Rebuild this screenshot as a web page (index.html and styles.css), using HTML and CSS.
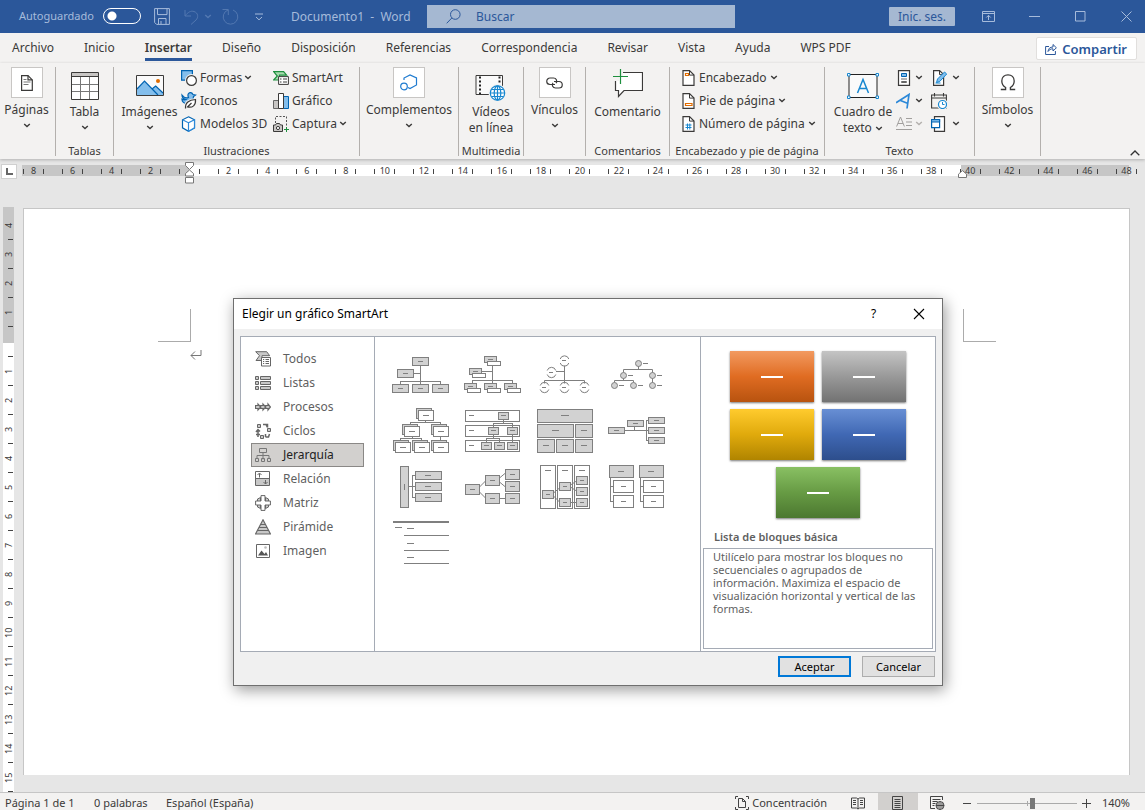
FILE: index.html
```html
<!DOCTYPE html>
<html lang="es">
<head>
<meta charset="utf-8">
<title>Documento1 - Word</title>
<link rel="stylesheet" href="styles.css">
</head>
<body>
<svg class="defs" width="0" height="0" aria-hidden="true">
  <symbol id="chev" viewBox="0 0 8 5"><path d="M1.200 1l2.800 2.600L6.800 1" fill="none" stroke="currentColor" stroke-width="1.400"/></symbol>
</svg>
<div class="app">
  <header class="titlebar">
    <label class="autosave">Autoguardado <input type="checkbox" class="toggle"></label>
    <button class="tb-btn save" aria-label="Guardar"><svg width="16" height="17" viewBox="0 0 16 17"><path d="M.6.6h14.800v15.800H2.600L.6 14.400zM3.500.6v6h9.500v-6M4.500 16v-5.500h7.500V16M7 16v-3" /></svg></button>
    <button class="tb-btn undo dim" aria-label="Deshacer"><svg width="15" height="16" viewBox="0 0 15 16"><path d="M1 1v6h6M1.200 6.800C4 3 7 1.500 10 2.500c4.500 1.500 4.500 6 2 8.500L7 15.500"/></svg></button>
    <button class="tb-btn more dim" aria-label="Opciones de deshacer"><svg width="8" height="5"><use href="#chev"/></svg></button>
    <button class="tb-btn redo dim" aria-label="Repetir"><svg width="17" height="17" viewBox="0 0 17 17"><path d="M.5 1.500h5.800v5.500M11 2A7.300 7.300 0 1 1 6 2"/></svg></button>
    <button class="tb-btn custom" aria-label="Personalizar barra"><svg width="8" height="8" viewBox="0 0 8 8"><path d="M0 1h8M1 4l3 2.800L7 4"/></svg></button>
    <span class="doc-title">Documento1&nbsp; -&nbsp; Word</span>
    <label class="search"><svg width="15" height="15" viewBox="0 0 15 15"><circle cx="9.300" cy="5.500" r="4.800"/><path d="M5.800 9L.7 14.300"/></svg><input type="text" placeholder="Buscar" aria-label="Buscar"></label>
    <span class="grow"></span>
    <button class="signin">Inic. ses.</button>
    <div class="winbtns">
      <button aria-label="Opciones de presentación de la cinta"><svg width="13" height="11" viewBox="0 0 13 11"><path d="M.5.5h12v10H.5zM.5 2.500h12M6.500 9V4.500M4.300 6.500l2.200-2.200 2.200 2.200"/></svg></button>
      <button aria-label="Minimizar"><svg width="11" height="11"><path d="M0 5.500h11"/></svg></button>
      <button aria-label="Maximizar"><svg width="11" height="11"><path d="M.5.5h9.500v9.500H.5z"/></svg></button>
      <button aria-label="Cerrar"><svg width="11" height="11"><path d="M.5.5l10 10M10.500.5l-10 10"/></svg></button>
    </div>
  </header>

  <nav class="tabs">
    <a href="#">Archivo</a><a href="#">Inicio</a><a href="#" class="active">Insertar</a><a href="#">Diseño</a><a href="#">Disposición</a><a href="#">Referencias</a><a href="#">Correspondencia</a><a href="#">Revisar</a><a href="#">Vista</a><a href="#">Ayuda</a><a href="#">WPS PDF</a>
    <span class="grow"></span>
    <button class="share"><svg width="12" height="12" viewBox="0 0 12 12"><path d="M4 3.500H.6v8h9.800V8M3 8.500c.3-3 2-4.500 5-4.500V1.500l3.400 3.300L8 8V5.800C5.500 5.800 4.200 6.800 3 8.500z"/></svg>Compartir</button>
  </nav>

  <div class="ribbon">
    <section class="group g-pages">
      <div class="body"><button class="big boxed"><span class="ico"><svg width="12" height="16" viewBox="0 0 12 16"><path d="M.6.6h6.400l4.300 4.300v10.500H.6z" fill="#fff" stroke="#3b3a39" stroke-width="1.200"/><path d="M7 .6v4.300h4.300" fill="none" stroke="#3b3a39" stroke-width="1.200"/><path d="M2.500 4.500h3M2.500 7h7M2.500 9.500h5" stroke="#777"/></svg></span><span>Páginas</span><svg class="chev" width="8" height="5"><use href="#chev"/></svg></button></div>
    </section>
    <section class="group g-table">
      <div class="body"><button class="big"><span class="ico"><svg width="28" height="28" viewBox="0 0 28 28"><path d="M.5.5h27v27H.5z" fill="#fff"/><path d="M1 1h26v4H1z" fill="#c8c6c4"/><path d="M1 12.500h26M1 19.500h26M9.500 5v22M18.500 5v22" stroke="#777"/><path d="M.5.5h27v27H.5zM.5 4.500h27" fill="none" stroke="#3b3a39"/></svg></span><span>Tabla</span><svg class="chev" width="8" height="5"><use href="#chev"/></svg></button></div>
      <h2>Tablas</h2>
    </section>
    <section class="group g-illus">
      <div class="body">
        <button class="big"><span class="ico"><svg width="28" height="21" viewBox="0 0 28 21"><path d="M.5.5h27v20H.5z" fill="#fafafa"/><path d="M1 14L8.500 6l7.500 7.500 3.500-2.500 7.500 7v2H1z" fill="#83beec"/><path d="M1 14L8.500 6 22 20M16 14l3.700-3 7.300 7" fill="none" stroke="#0063b1" stroke-width="1.200"/><circle cx="22" cy="6" r="2" fill="#e06c00"/><path d="M.5.5h27v20H.5z" fill="none" stroke="#3b3a39"/></svg></span><span>Imágenes</span><svg class="chev" width="8" height="5"><use href="#chev"/></svg></button>
        <div class="stack s1">
          <button class="small"><svg width="16" height="16" viewBox="0 0 16 16"><path d="M.6.6h10.800v9.500H.6z" fill="#83beec" stroke="#0063b1" stroke-width="1.200"/><circle cx="10.500" cy="10.500" r="5" fill="#f3f2f1" stroke="#f3f2f1" stroke-width="3"/><circle cx="10.500" cy="10.500" r="4.900" fill="#fff" stroke="#3b3a39" stroke-width="1.200"/></svg>Formas<svg class="chev" width="8" height="5"><use href="#chev"/></svg></button>
          <button class="small"><svg width="16" height="17" viewBox="0 0 16 17"><path d="M1 3c2 2.500 4.500 3.500 6.500 2.500C6 2 8 .5 9.500.6 11 .7 11.500 1.500 12 2.500l2.500.5-2 1.500c0 3-2.500 6.500-6 7C3 12 .8 9.500 1 7c1.500 1 3 1 4 .5C2.500 7 1 5.500 1 3z" fill="#83beec" stroke="#0063b1" stroke-width="1.200"/><path d="M4.500 16C4 10.500 8 8 14.500 7.500c.5 6-3 8.500-8 7.500z" fill="#f3f2f1" stroke="#f3f2f1" stroke-width="3"/><path d="M4.500 16.500C4 10.500 8 8 14.500 7.500c.5 6-3 8.500-8 7.500L10.500 11" fill="#fff" stroke="#3b3a39" stroke-width="1.200"/></svg>Iconos</button>
          <button class="small"><svg width="16" height="16" viewBox="0 0 16 16"><path d="M7.500.8l6 3v8l-6 3.400-6-3.400v-8z" fill="#fff" stroke="#0063b1" stroke-width="1.200"/><path d="M1.500 3.800l6 3v8.400l6-3.400v-8l-6 3" fill="#fff" stroke="#2b88d8" stroke-width="1.200"/></svg>Modelos 3D</button>
        </div>
        <div class="stack s2">
          <button class="small"><svg width="16" height="14" viewBox="0 0 16 14"><path d="M.6.6h10l3 3.600H6.500V9H.6l3.700-4z" fill="#a9dbb0" stroke="#1e8f3e" stroke-width="1.200"/><path d="M5.600 5.600h9.800v7.800H5.600z" fill="#fff" stroke="#3b3a39"/><path d="M7 8h1.500M10 8h4M7 11h1.500M10 11h4" stroke="#3b3a39"/></svg>SmartArt</button>
          <button class="small"><svg width="16" height="16" viewBox="0 0 16 16"><path d="M.5 7.500h5v8h-5z" fill="#c8c6c4" stroke="#666"/><path d="M10.500 3.500h5v12h-5z" fill="#83beec" stroke="#0063b1"/><path d="M5.500.5h5v15h-5z" fill="#fff" stroke="#3b3a39"/></svg>Gráfico</button>
          <button class="small"><svg width="16" height="16" viewBox="0 0 16 16"><path d="M2.500 7V.5h11v10" fill="none" stroke="#555" stroke-dasharray="2 1.500"/><path d="M.5 9h2l1-1.500h3L7.500 9h2v6.500h-9z" fill="#c8c6c4" stroke="#3b3a39"/><circle cx="5" cy="12" r="1.600" fill="#fff" stroke="#3b3a39"/><path d="M11 13.500h5M13.500 11v5" stroke="#1e8f3e"/></svg>Captura<svg class="chev" width="8" height="5"><use href="#chev"/></svg></button>
        </div>
      </div>
      <h2>Ilustraciones</h2>
    </section>
    <section class="group g-addins">
      <div class="body"><button class="big boxed"><span class="ico"><svg width="18" height="17" viewBox="0 0 18 17" fill="none" stroke="#1f7bd0" stroke-width="1.200"><path d="M4 6V4l6-3 6.500 3v7L10 14.500 8 13.500"/><circle cx="4" cy="12.500" r="3.300"/></svg></span><span>Complementos</span><svg class="chev" width="8" height="5"><use href="#chev"/></svg></button></div>
    </section>
    <section class="group g-media">
      <div class="body"><button class="big"><span class="ico low"><svg width="31" height="27" viewBox="0 0 31 27"><path d="M1 1.500h26.500v19H1z" fill="#fafafa" stroke="#3b3a39"/><path d="M5 2.500V20M24.500 2.500v8" stroke="#222" stroke-width="2" stroke-dasharray="2 2"/><circle cx="22.500" cy="19" r="9" fill="#f3f2f1"/><g fill="#fff" stroke="#1787d0" stroke-width="1.200"><circle cx="22.500" cy="19" r="7.200"/><ellipse cx="22.500" cy="19" rx="3.300" ry="7.200"/><path d="M15.500 19h14M16.500 15.500h12M16.500 22.500h12M22.500 12v14" fill="none"/></g></svg></span><span>Vídeos<br>en línea</span></button></div>
      <h2>Multimedia</h2>
    </section>
    <section class="group g-links">
      <div class="body"><button class="big boxed"><span class="ico"><svg width="17" height="12" viewBox="0 0 17 12" fill="none" stroke="#3b3a39" stroke-width="1.200"><path d="M9 7.500H4a3.200 3.200 0 0 1 0-6.500h3.500a3.200 3.200 0 0 1 2.500 5.200"/><path d="M8 4.500h5a3.200 3.200 0 0 1 0 6.500H9.500A3.200 3.200 0 0 1 7 5.800"/></svg></span><span>Vínculos</span><svg class="chev" width="8" height="5"><use href="#chev"/></svg></button></div>
    </section>
    <section class="group g-comments">
      <div class="body"><button class="big"><span class="ico high"><svg width="30" height="29" viewBox="0 0 30 29"><path d="M2.500 3.500h27v18H11l-5.500 6v-6h-3z" fill="#fff" stroke="#3b3a39" stroke-width="1.200"/><path d="M0 0h10v7H0zM0 7h6v5H0z" fill="#f3f2f1"/><path d="M0 7.500h15M7.500 0v15" stroke="#1e8f3e" stroke-width="1.200"/></svg></span><span>Comentario</span></button></div>
      <h2>Comentarios</h2>
    </section>
    <section class="group g-header">
      <div class="body"><div class="stack">
        <button class="small"><svg width="13" height="16" viewBox="0 0 13 16"><path d="M1 .6h6.500l4.500 4.500v10.300H1z" fill="#fff" stroke="#3b3a39" stroke-width="1.200"/><path d="M7.500.6v4.500H12" fill="none" stroke="#3b3a39"/><path d="M3.500 3.500h3v2h-3z" fill="#fff" stroke="#e06c00" stroke-width="1.200"/></svg>Encabezado<svg class="chev" width="8" height="5"><use href="#chev"/></svg></button>
        <button class="small"><svg width="13" height="16" viewBox="0 0 13 16"><path d="M1 .6h6.500l4.500 4.500v10.300H1z" fill="#fff" stroke="#3b3a39" stroke-width="1.200"/><path d="M7.500.6v4.500H12" fill="none" stroke="#3b3a39"/><path d="M3.500 10.500h6.500v2H3.500z" fill="#fff" stroke="#e06c00" stroke-width="1.200"/></svg>Pie de página<svg class="chev" width="8" height="5"><use href="#chev"/></svg></button>
        <button class="small"><svg width="13" height="16" viewBox="0 0 13 16"><path d="M1 .6h6.500l4.500 4.500v10.300H1z" fill="#fff" stroke="#3b3a39" stroke-width="1.200"/><path d="M7.500.6v4.500H12" fill="none" stroke="#3b3a39"/><path d="M3.500 9h6M3.500 11.500h6M5.500 7.500v6M7.800 7.500v6" stroke="#1787d0"/></svg>Número de página<svg class="chev" width="8" height="5"><use href="#chev"/></svg></button>
      </div></div>
      <h2>Encabezado y pie de página</h2>
    </section>
    <section class="group g-text">
      <div class="body">
        <button class="big"><span class="ico"><svg width="32" height="26" viewBox="0 0 32 26"><path d="M2 1.500h28v23H2z" fill="#fafafa" stroke="#222"/><path d="M10.500 20L16 6.500 21.500 20M12.500 15.500h7" fill="none" stroke="#1787d0" stroke-width="1.500"/><path d="M.5.5h2.500v2.500H.5zM29 .5h2.500v2.500H29zM.5 23h2.500v2.500H.5zM29 23h2.500v2.500H29z" fill="#fff" stroke="#1787d0"/></svg></span><span>Cuadro de<br>texto <svg class="inline-chev" width="8" height="5"><use href="#chev"/></svg></span></button>
        <div class="stack icons t1">
          <button class="small" aria-label="Elementos rápidos"><svg width="16" height="16" viewBox="0 0 16 16"><path d="M2.500.6h11v14.800h-11z" fill="#fff" stroke="#3b3a39" stroke-width="1.200"/><path d="M5.500 3.500h5v3h-5z" fill="#83beec" stroke="#0063b1"/><path d="M5 9h6M5.500 11.500h5v1h-5z" stroke="#666" fill="none"/></svg><svg class="chev" width="8" height="5"><use href="#chev"/></svg></button>
          <button class="small" aria-label="WordArt"><svg width="16" height="16" viewBox="0 0 16 16"><path d="M0 9.800L13 1.500l-2 14M4.500 7.500l7.500 3" fill="none" stroke="#2b88d8" stroke-width="1.700"/></svg><svg class="chev" width="8" height="5"><use href="#chev"/></svg></button>
          <button class="small off" aria-label="Letra capital"><svg width="16" height="16" viewBox="0 0 16 16"><path d="M.6 10.500L4.500 1 8.400 10.500M2 7.500h5M10 2.500h6M10 6h6M10 9.500h6M0 13.500h16" fill="none" stroke="#a19f9d"/></svg><svg class="chev" width="8" height="5"><use href="#chev"/></svg></button>
        </div>
        <div class="stack icons t2">
          <button class="small" aria-label="Línea de firma"><svg width="16" height="16" viewBox="0 0 16 16"><path d="M2.600.6h6l4 4v10.800h-10z" fill="#fff" stroke="#3b3a39" stroke-width="1.200"/><path d="M8.500.6v4h4" fill="none" stroke="#3b3a39"/><path d="M5.500 12.500l1-3.500L13.500 2l2.200 2-7 7.500z" fill="#83beec" stroke="#1787d0"/><path d="M4.500 13h5" stroke="#1787d0"/></svg><svg class="chev" width="8" height="5"><use href="#chev"/></svg></button>
          <button class="small" aria-label="Fecha y hora"><svg width="16" height="16" viewBox="0 0 16 16"><path d="M.6 2h14.800v13H.6zM.6 5h14.800M3.500 0v3.500M12.500 0v3.500" fill="none" stroke="#3b3a39" stroke-width="1.100"/><circle cx="11.500" cy="11.500" r="5.500" fill="#f3f2f1"/><circle cx="11.500" cy="11.500" r="4" fill="#fff" stroke="#1787d0" stroke-width="1.200"/><path d="M11.500 9v2.500h2" fill="none" stroke="#1787d0"/></svg></button>
          <button class="small" aria-label="Objeto"><svg width="16" height="16" viewBox="0 0 16 16"><path d="M3.500.6h10v14.800h-10z" fill="#fff" stroke="#3b3a39" stroke-width="1.200"/><path d="M.6 3.600h8v8h-8z" fill="#fff" stroke="#0063b1" stroke-width="1.200"/><path d="M.6 3.600h8v2.400h-8z" fill="#83beec" stroke="#0063b1"/></svg><svg class="chev" width="8" height="5"><use href="#chev"/></svg></button>
        </div>
      </div>
      <h2>Texto</h2>
    </section>
    <section class="group g-symbols">
      <div class="body"><button class="big boxed"><span class="ico"><svg width="16" height="17" viewBox="0 0 16 17"><path d="M.8 15.500H5.600v-2C3 12 1.800 9.800 1.800 7c0-4 2.600-6.200 6.200-6.200S14.200 3 14.200 7c0 2.800-1.200 5-3.800 6.500v2h4.800" fill="none" stroke="#3b3a39" stroke-width="1.300"/></svg></span><span>Símbolos</span><svg class="chev" width="8" height="5"><use href="#chev"/></svg></button></div>
    </section>
    <button class="collapse" aria-label="Contraer la cinta"><svg width="10" height="6" viewBox="0 0 10 6"><path d="M.7 5.300L5 1l4.300 4.300" fill="none" stroke="#333" stroke-width="1.300"/></svg></button>
  </div>

  <div class="hruler-row">
    <button class="tabstop" aria-label="Tabulación"><svg width="7" height="7"><path d="M1 0v6h6" fill="none" stroke="#666" stroke-width="2"/></svg></button>
    <div class="hruler">
      <div class="cells"><span>8</span><span>6</span><span>4</span><span>2</span><span></span><span>2</span><span>4</span><span>6</span><span>8</span><span>10</span><span>12</span><span>14</span><span>16</span><span>18</span><span>20</span><span>22</span><span>24</span><span>26</span><span>28</span><span>30</span><span>32</span><span>34</span><span>36</span><span>38</span><span>40</span><span>42</span><span>44</span><span>46</span><span>48</span></div>
      <svg class="indent-left" width="10" height="22" viewBox="0 0 10 22"><path d="M.5.5h8v3l-4 4-4-4zM4.500 8l4 3.500V14h-8v-2.500zM.5 15.500h8v5.500h-8z" fill="#fff" stroke="#777"/></svg>
      <svg class="indent-right" width="10" height="8" viewBox="0 0 10 8"><path d="M4.500.6l4 3.500v3.400h-8V4.100z" fill="#fff" stroke="#777"/></svg>
    </div>
  </div>

  <main class="workspace">
    <div class="vruler"><span>4</span><span>3</span><span>2</span><span>1</span><span class="origin"></span><span>1</span><span>2</span><span>3</span><span>4</span><span>5</span><span>6</span><span>7</span><span>8</span><span>9</span><span>10</span><span>11</span><span>12</span><span>13</span><span>14</span><span>15</span></div>
    <div class="page">
      <i class="corner left"></i><i class="corner right"></i>
      <svg class="pmark" width="12" height="11" viewBox="0 0 12 11"><path d="M11 0v5.500H1M5 1.500l-4 4 4 4" fill="none" stroke="#777"/></svg>
    </div>
  </main>

  <footer class="status">
    <span class="st-page">Página 1 de 1</span><span class="st-words">0 palabras</span><span>Español (España)</span>
    <span class="grow"></span>
    <button class="focus"><svg width="14" height="14" viewBox="0 0 14 14" fill="none" stroke="#444"><path d="M3 .5H.5V3M11 .5h2.500V3M3 13.500H.5V11M11 13.500h2.500V11M3.500 2.500h4l3 3v6h-7zM7.500 2.500v3h3"/></svg>Concentración</button>
    <button class="view" aria-label="Modo lectura"><svg width="14" height="13" viewBox="0 0 14 13" fill="none" stroke="#444"><path d="M.5 1h5l1.500 1 1.500-1h5v10h-5L7 12l-1.500-1h-5zM7 2v10M2 3.500h3M2 5.500h3M2 7.500h3M9 3.500h3M9 5.500h3M9 7.500h3"/></svg></button>
    <button class="view on" aria-label="Diseño de impresión"><svg width="12" height="14" viewBox="0 0 12 14" fill="none" stroke="#444"><path d="M.5.5h10v13H.5zM2.500 3.500h6M2.500 5.500h6M2.500 7.500h6M2.500 9.500h6M2.500 11.500h6"/></svg></button>
    <button class="view" aria-label="Diseño web"><svg width="15" height="14" viewBox="0 0 15 14" fill="none" stroke="#444"><path d="M5 12.500H.5V.5h12V4M2.500 3.500h8M2.500 5.500h5M2.500 7.500h3M2.500 9.500h2"/><circle cx="10" cy="9.500" r="4"/><path d="M6 9.500h8M10 5.500v8M8 6.500v6M12 6.500v6"/></svg></button>
    <button class="zoombtn" aria-label="Alejar"><svg width="9" height="9"><path d="M0 4.500h8" stroke="#444"/></svg></button>
    <input type="range" class="zoom" min="0" max="100" value="56" aria-label="Zoom">
    <button class="zoombtn" aria-label="Acercar"><svg width="9" height="9"><path d="M0 4.500h9M4.500 0v9" stroke="#444"/></svg></button>
    <span class="pct">140%</span>
  </footer>
</div>

<div class="dialog" role="dialog" aria-labelledby="dlg-title">
  <div class="dlg-title"><span id="dlg-title">Elegir un gráfico SmartArt</span><span class="grow"></span><button aria-label="Ayuda">?</button><button aria-label="Cerrar"><svg width="12" height="12"><path d="M1 1l10 10M11 1L1 11" stroke="#000" stroke-width="1.100"/></svg></button></div>
  <div class="panes">
    <ul class="cats">
      <li><button><svg width="16" height="16" viewBox="0 0 16 16"><path d="M.7.7h11l3 4H7v4.800H1l3.500-4.800z" fill="#c8c8c8" stroke="#666"/><path d="M6.500 6.500h9v8.500h-9z" fill="#fff" stroke="#666"/><path d="M8 8.500h1.200M10.500 8.500h3.500M8 10.500h1.200M10.500 10.500h3.500M8 12.500h1.200M10.500 12.500h3.500" stroke="#666"/></svg>Todos</button></li>
      <li><button><svg width="16" height="16" viewBox="0 0 16 16" fill="#c8c8c8" stroke="#666"><path d="M.5 1.500h3v3h-3zM5.500 1.500h10v3h-10zM.5 6.500h3v3h-3zM5.500 6.500h10v3h-10zM.5 11.500h3v3h-3zM5.500 11.500h10v3h-10z"/></svg>Listas</button></li>
      <li><button><svg width="16" height="16" viewBox="0 0 16 16" fill="#c8c8c8" stroke="#666" stroke-width="1.200"><path d="M.5 6.500H3V5l2.700 3L3 11V9.500H.5zM5.700 6.500H8V5l2.700 3L8 11V9.500H5.700zM10.700 6.500H13V5l2.500 3L13 11V9.500h-2.300z"/></svg>Procesos</button></li>
      <li><button><svg width="16" height="16" viewBox="0 0 16 16" fill="#c8c8c8" stroke="#666"><path d="M2.500 1.500h3v3h-3zM12.500 5.500h3v3h-3zM5.500 12.500h3v3h-3z"/><path d="M8 1.500h4.500v3M11 1.500l1.500 3M14.500 11l-1 3h-3M10.500 11v3M1 11.500h4M3 10v4M1 9l2-2.500 2 2M3 7v3" fill="none" stroke-width="1.500"/></svg>Ciclos</button></li>
      <li><button class="selected"><svg width="16" height="16" viewBox="0 0 16 16" fill="#d4d2d0" stroke="#777"><path d="M4.500 1.500h7v4h-7zM8 5.500v7M2 11.500v-3h12v3M.5 11.500h3v3h-3zM6.500 11.500h3v3h-3zM12.500 11.500h3v3h-3z"/></svg>Jerarquía</button></li>
      <li><button><svg width="16" height="16" viewBox="0 0 16 16"><path d="M.5.5h14v7H.5z" fill="#fff"/><path d="M.5 7.500h14v7H.5z" fill="#c8c8c8"/><path d="M.5.5h14v14H.5zM.5 7.500h14M4.500 6.500v-4M2.500 4l2-2 2 2M10.500 9v4M8.500 11l2 2 2-2" fill="none" stroke="#666"/></svg>Relación</button></li>
      <li><button><svg width="16" height="16" viewBox="0 0 16 16"><path d="M3 3h10v10H3z" fill="#c8c8c8"/><path d="M5.500 6V2.500L2.500 4v2M10.500 6V2.500l3 1.500v2M5.500 10v3.500L2.500 12v-2M10.500 10v3.500l3-1.500v-2" fill="#c8c8c8" stroke="#666"/><path d="M6 .6h4v5.400h5.400v4H10v5.400H6V10H.6V6H6z" fill="#fff" stroke="#666"/></svg>Matriz</button></li>
      <li><button><svg width="16" height="16" viewBox="0 0 16 16"><path d="M8 .8L15.500 15H.5z" fill="#c8c8c8" stroke="#666" stroke-width="1.200"/><path d="M5.500 5.500h5M4 8.500h8M2.500 11.500h11" stroke="#666"/></svg>Pirámide</button></li>
      <li><button><svg width="16" height="16" viewBox="0 0 16 16"><path d="M1.500 1.500h13v13h-13z" fill="#fff" stroke="#666"/><path d="M3 12.500l3.500-5 3 3.500 1.500-2 2 3.500z" fill="#555"/><circle cx="10.500" cy="4.500" r="1.300" fill="#bbb"/></svg>Imagen</button></li>
    </ul>
    <div class="gallery">
      <svg viewBox="0 0 60 48"><path d="M30.500 13.500v19M23.500 21.500h7M10.500 32.500v-3h40v3"/><path class="f" d="M22.500 5.500h16v8h-16zM7.500 17.500h16v8h-16zM2.500 32.500h16v8h-16zM22.500 32.500h16v8h-16zM42.500 32.500h16v8h-16z"/><path d="M28 9.500h5M13 21.500h5M8 36.500h5M28 36.500h5M48 36.500h5"/></svg>
      <svg viewBox="0 0 60 48"><path d="M29.500 13.500v18M18.500 19.500h11M9.500 31.500v-3h40v3"/><path class="f" d="M21.500 4.500h12v6h-12zM6.500 16.500h12v6h-12zM1.500 31.500h12v6h-12zM21.500 31.500h12v6h-12zM41.500 31.500h12v6h-12z"/><path d="M25 7.500h5M10 19.500h5M5 34.500h5M25 34.500h5M45 34.500h5"/><path class="w" d="M24.500 9.500h13v4h-13zM9.500 21.500h13v4h-13zM4.500 36.500h13v4h-13zM24.500 36.500h13v4h-13zM44.500 36.500h13v4h-13z"/></svg>
      <svg class="smooth" viewBox="0 0 60 48"><path d="M28.500 13.500v18M20 19.500h8.500M8.500 31.500v-3h40v3"/><path d="M24.200 7a4.500 4.500 0 0 1 8.600 0M24.200 11a4.500 4.500 0 0 0 8.600 0M11.200 18.500a4.500 4.500 0 0 1 8.600 0M11.200 22.500a4.500 4.500 0 0 0 8.600 0M4.200 33.500a4.500 4.500 0 0 1 8.600 0M4.200 37.500a4.500 4.500 0 0 0 8.600 0M24.200 33.500a4.500 4.500 0 0 1 8.600 0M24.200 37.500a4.500 4.500 0 0 0 8.600 0M44.200 33.500a4.500 4.500 0 0 1 8.600 0M44.200 37.500a4.500 4.500 0 0 0 8.600 0M26 8.500h4M13 20.500h4M6 35.500h4M26 35.500h4M46 35.500h4"/></svg>
      <svg class="smooth" viewBox="0 0 60 48"><path d="M29.500 14v3.500M14.500 20.500v-3h29v16M14.500 26v2.500M5.500 30.500v-2h19v2"/><g class="f"><circle cx="29.500" cy="11.500" r="3"/><circle cx="14.500" cy="23.500" r="3"/><circle cx="43.500" cy="23.500" r="3"/><circle cx="5.500" cy="33.500" r="3"/><circle cx="24.500" cy="33.500" r="3"/><circle cx="43.500" cy="33.500" r="3"/></g><path d="M34 11.500h5M19 23.500h5M48 23.500h5M10 33.500h5M29 33.500h5M48 33.500h5"/></svg>

      <svg viewBox="0 0 60 48"><path d="M35.500 12v3M20.500 18v-3.500h30V18M22.500 28v2.500M10.500 34v-3.500h21V34M50.500 28v6"/><path class="f" d="M26.500.5h15v10h-15zM12.500 16.500h15v10h-15zM41.500 16.500h15v10h-15zM3.500 32.500h15v10h-15zM22.500 32.500h15v10h-15zM41.500 32.500h15v10h-15z"/><path class="w" d="M28.500 2.500h15v10h-15zM14.500 18.500h15v10h-15zM43.500 18.500h15v10h-15zM5.500 34.500h15v10h-15zM24.500 34.500h15v10h-15zM43.500 34.500h15v10h-15z"/><path d="M33 7.500h6M19 23.500h6M48 23.500h6M10 39.500h6M29 39.500h6M48 39.500h6"/></svg>
      <svg viewBox="0 0 60 48"><path class="w" d="M2.500 2.500h54v11h-54zM2.500 17.500h54v11h-54zM2.500 32.500h54v11h-54z"/><path d="M40.500 11.500v4M30.500 19.500v-4h19v19M30.500 26.500v4M23.500 34.500v-4h13v4M6 7.500h5M6 22.500h5M6 37.500h5"/><path class="f" d="M35.500 4.500h10v7h-10zM25.500 19.500h10v7h-10zM44.500 19.500h10v7h-10zM18.500 34.500h10v7h-10zM31.500 34.500h10v7h-10zM44.500 34.500h10v7h-10z"/><path d="M38 7.500h5M28 22.500h5M47 22.500h5M21 37.500h5M34 37.500h5M47 37.500h5"/></svg>
      <svg viewBox="0 0 60 48"><path class="f" d="M1.500 1.500h55v13h-55zM1.500 16.500h36v13h-36zM39.500 16.500h17v13h-17zM1.500 31.500h17v13h-17zM20.500 31.500h17v13h-17zM39.500 31.500h17v13h-17z"/><path d="M25 7.500h8M16 22.500h7M45 22.500h6M7 37.500h6M26 37.500h6M45 37.500h6"/></svg>
      <svg viewBox="0 0 60 48"><path d="M15.500 22.500h24M25.500 18.500v4M39.500 12.500h-2v20h2"/><path class="f" d="M-.5 19.500h16v6h-16zM18.500 12.500h16v6h-16zM39.500 9.500h16v6h-16zM39.500 19.500h16v6h-16zM39.500 29.500h16v6h-16z"/><path d="M5 22.500h5M24 15.500h5M45 12.500h5M45 22.500h5M45 32.500h5"/></svg>

      <svg viewBox="0 0 60 48"><path d="M18.500 22.500h7M25.500 11.500h-3v22h3"/><path class="f" d="M10.500 2.500h8v41h-8zM25.500 7.500h26v8h-26zM25.500 18.500h26v8h-26zM25.500 29.500h26v8h-26z"/><path d="M14.500 20v6M35 11.500h6M35 22.500h6M35 33.500h6"/></svg>
      <svg viewBox="0 0 60 48"><path class="diag" d="M16.500 23l6-6M16.500 28l6 6M36.500 14l6-5M36.500 18l6 5M36.500 34.500h6"/><path class="f" d="M2.500 20.500h14v10h-14zM22.500 11.500h14v10h-14zM22.500 29.500h14v10h-14zM42.500 5.500h14v10h-14zM42.500 17.500h14v10h-14zM42.500 29.500h14v10h-14z"/><path d="M7 25.500h5M27 16.500h5M27 34.500h5M47 10.500h5M47 22.500h5M47 34.500h5"/></svg>
      <svg viewBox="0 0 60 48"><path class="w" d="M4.500 1.500h15v43h-15zM21.500 1.500h15v43h-15zM38.500 1.500h15v43h-15z"/><path class="diag" d="M17.500 29l6-5M17.500 32l6 6M34.500 21l6-4M34.500 23l6 4M34.500 38.500h6"/><path class="f" d="M6.500 26.500h11v8h-11zM23.500 18.500h11v8h-11zM23.500 34.500h11v8h-11zM40.500 12.500h11v8h-11zM40.500 23.500h11v8h-11zM40.500 34.500h11v8h-11z"/><path d="M9 6.500h6M26 6.500h6M43 6.500h6M10 30.500h4M27 22.500h4M27 38.500h4M44 16.500h4M44 27.500h4M44 38.500h4"/></svg>
      <svg viewBox="0 0 60 48"><path d="M1.500 13.500v24h3M1.500 22.500h3M31.500 13.500v24h3M31.500 22.500h3"/><path class="f" d="M.5 1.500h24v12H.5zM30.500 1.500h24v12h-24z"/><path class="w" d="M4.500 16.500h20v12h-20zM4.500 31.500h20v12h-20zM34.500 16.500h20v12h-20zM34.500 31.500h20v12h-20z"/><path d="M9 7.500h6M39 7.500h6M12 22.500h5M12 37.500h5M42 22.500h5M42 37.500h5"/></svg>

      <svg viewBox="0 0 60 48"><path d="M3 2h56" stroke-width="2"/><path d="M5 7.500h7M17 8.500h7M14 15.500h45M17 23.500h7M14 30.500h45M17 37.500h7M14 43.500h45"/></svg>
    </div>
    <div class="preview">
      <div class="tiles"><i class="orange"></i><i class="gray"></i><i class="gold"></i><i class="blue"></i><i class="green"></i></div>
      <h3>Lista de bloques básica</h3>
      <p>Utilícelo para mostrar los bloques no secuenciales o agrupados de información. Maximiza el espacio de visualización horizontal y vertical de las formas.</p>
    </div>
  </div>
  <div class="actions"><button class="ok">Aceptar</button><button>Cancelar</button></div>
</div>
</body>
</html>
```
FILE: styles.css
```css
* { box-sizing: border-box; }
body { margin: 0; font: 12px/16px "Noto Sans", "Open Sans", sans-serif; color: #3b3a39; }
button { font: inherit; color: inherit; background: none; border: 0; padding: 0; margin: 0; }
svg { flex: none; }
.defs { position: absolute; }
.grow { flex: 1; }
.app { height: 100vh; display: flex; flex-direction: column; overflow: hidden; background: #e6e6e6; }

.titlebar { flex: none; height: 33px; background: #2b579a; color: #a6bbdb; display: flex; align-items: center; padding-left: 19px; white-space: nowrap; }
.titlebar svg { fill: none; stroke: currentColor; display: block; }
.autosave { flex: none; display: flex; align-items: center; width: 122px; justify-content: space-between; padding-bottom: 1px; font-size: 11px; }
.toggle { appearance: none; flex: none; margin: 0; width: 38px; height: 16px; border: 1px solid #fff; border-radius: 8px; background: radial-gradient(circle at 8px 7px, #fff 4px, transparent 5px); }
.dim { color: #5378b1; }
.save { margin-left: 13px; }
.undo { margin-left: 14px; }
.more { margin-left: 5px; }
.redo { margin-left: 10px; }
.custom { margin-left: 16px; }
.doc-title { margin-left: 28px; width: 136px; }
.search { width: 308px; height: 23px; background: #a5b8d2; display: flex; align-items: center; padding-left: 19px; gap: 15px; color: #2b579a; }
.search input { flex: 1; min-width: 0; border: 0; background: none; font: inherit; font-size: 12px; padding: 0; outline: 0; }
.search input::placeholder { color: #2b579a; opacity: 1; }
.signin { width: 66px; height: 19px; background: #a5b8d2; color: #2b579a; border-radius: 1px; }
.winbtns { display: flex; margin: 0 -4px 0 10px; }
.winbtns button { width: 46px; height: 28px; display: grid; place-items: center; }

.tabs { flex: none; height: 30px; background: #f3f2f1; display: flex; align-items: flex-start; gap: 30px; padding: 0 8px 0 12px; white-space: nowrap; }
.tabs a { color: inherit; text-decoration: none; height: 28px; line-height: 30px; }
.tabs .active { font-weight: 600; border-bottom: 3px solid #2b579a; }
.share { display: flex; align-items: center; gap: 5px; height: 23px; margin-top: 4px; padding: 0 9px 0 8px; background: #fff; border: 1px solid #e1dfdd; border-radius: 2px; color: #2b579a; font-size: 13px; font-weight: 600; }
.share svg { fill: none; stroke: #2b579a; }

.ribbon { flex: none; height: 96px; background: #f3f2f1; display: flex; padding: 4px 0 3px; box-shadow: 0 1px 3px #b0b0b0; position: relative; white-space: nowrap; }
.group { flex: none; display: flex; flex-direction: column; border-right: 1px solid #b3b0ad; }
.body { flex: 1; display: flex; justify-content: center; align-items: flex-start; min-height: 0; }
.group h2 { margin: 0; font-size: 11px; line-height: 10px; font-weight: 400; text-align: center; }
.g-pages { width: 56px; padding-right: 2px; }
.g-table { width: 58px; }
.g-illus { width: 246px; }
.g-illus .body, .g-text .body, .g-header .body { justify-content: flex-start; }
.g-illus .big, .g-text .big { width: 51px; margin-left: 10px; }
.g-text .big { width: 56px; }
.g-addins { width: 99px; }
.g-media { width: 65px; }
.g-links { width: 62px; }
.g-comments { width: 84px; }
.g-header { width: 155px; }
.g-text { width: 150px; }
.g-symbols { width: 66px; }
.big { display: flex; flex-direction: column; align-items: center; }
.big .ico { height: 37px; display: grid; place-items: center; }
.big .low { padding-top: 4px; }
.big .high { padding-bottom: 4px; }
.big .chev { margin-top: 5px; }
.big.boxed .ico { width: 32px; height: 31px; margin-bottom: 4px; background: #fff; border: 1px solid #c8c6c4; }
.inline-chev { vertical-align: middle; }
.stack { display: flex; flex-direction: column; margin-top: -1px; }
.small { display: flex; align-items: center; height: 23px; gap: 3px; }
.small .chev { margin-left: -1px; }
.s1 { margin-left: 6px; width: 92px; }
.g-header .stack { margin-left: 12px; }
.g-header .small { gap: 4px; }
.icons { width: 35px; margin-left: 5px; }
.icons .small { gap: 4px; }
.t2 { margin-left: 0; }
.t2 .small { gap: 6px; }
.off .chev { color: #b3b0ad; }
.collapse { margin-left: auto; align-self: flex-end; padding: 0 5px; line-height: 0; }

.hruler-row { flex: none; display: flex; height: 42px; padding-top: 6px; }
.tabstop { width: 16px; height: 15px; margin: -1px 5px 0 1px; background: #fff; border: 1px solid #d0d0d0; display: grid; place-items: center; flex: none; }
.hruler { flex: 1; height: 11px; position: relative; background: linear-gradient(90deg, #c6c6c6 167px, #fff 167px, #fff 939px, #c6c6c6 939px, #c6c6c6 1107px, transparent 1107px); }
.cells { display: flex; margin: 0 -1px 0 -8px; }
.cells span { flex: 1; min-width: 0; font-size: 9px; line-height: 11px; height: 11px; text-align: center; background: linear-gradient(#444, #444) 9px 4px / 1px 5px no-repeat, linear-gradient(#444, #444) 29px 4px / 1px 5px no-repeat; }
.indent-left { position: absolute; left: 163px; top: -3px; }
.indent-right { position: absolute; left: 936px; top: 5px; }

.workspace { flex: 1; min-height: 0; display: flex; align-items: flex-start; padding: 6px 15px 0 3px; overflow: hidden; }
.vruler { flex: none; width: 11px; display: flex; flex-direction: column; padding-top: 4px; background: linear-gradient(#c6c6c6 136px, #fff 136px); }
.vruler span { height: 29px; width: 11px; font-size: 9px; line-height: 11px; writing-mode: vertical-rl; transform: rotate(180deg); text-align: center; background: linear-gradient(#444, #444) 1px 0 / 5px 1px no-repeat; }
.vruler .origin { height: 30px; }
.page { flex: 1; align-self: stretch; margin: 1px 0 17px 9px; background: #fff; border: 1px solid #c6c6c6; border-bottom: 0; position: relative; }
.corner { position: absolute; top: 100px; width: 33px; height: 33px; border-bottom: 1px solid #ababab; }
.corner.left { left: 134px; border-right: 1px solid #ababab; }
.corner.right { right: 133px; border-left: 1px solid #ababab; }
.pmark { position: absolute; left: 166px; top: 141px; }

.status { flex: none; height: 18px; background: #f3f2f1; border-top: 1px solid #c6c6c6; display: flex; align-items: flex-start; font-size: 11px; line-height: 20px; overflow: hidden; white-space: nowrap; padding-left: 5px; }
.st-page { width: 89px; }
.st-words { width: 72px; }
.focus { display: flex; gap: 3px; line-height: 20px; align-items: flex-start; margin-right: 11px; }
.focus svg { margin-top: 3px; }
.view { width: 40px; height: 20px; display: grid; place-items: center; flex: none; }
.view.on { background: #d2d0ce; }
.zoombtn { height: 20px; width: 9px; margin-left: 5px; line-height: 0; }
.zoom { appearance: none; width: 100px; height: 20px; margin: 0 0 0 5px; background: linear-gradient(#aaa, #aaa) 0 10px / 100% 1px no-repeat, linear-gradient(#aaa, #aaa) 50px 8px / 1px 5px no-repeat; }
.zoom::-webkit-slider-thumb { appearance: none; width: 5px; height: 11px; background: #777; }
.pct { margin: 0 15px 0 11px; }

.dialog { position: absolute; left: 233px; top: 298px; width: 710px; background: #f0f0f0; border: 1px solid #6f6f6f; box-shadow: 2px 4px 14px rgba(0, 0, 0, .4); color: #000; display: flex; flex-direction: column; }
.dlg-title { height: 30px; background: #fff; display: flex; align-items: center; padding: 0 1px 0 8px; }
.dlg-title button { width: 45px; height: 28px; display: grid; place-items: center; }
.panes { margin: 7px 6px 0; height: 316px; background: #fff; border: 1px solid #a5abb5; display: flex; }
.cats { list-style: none; margin: 0; padding: 10px; width: 134px; border-right: 1px solid #a5abb5; color: #5f5f5f; }
.cats button { width: 113px; height: 24px; display: flex; align-items: center; gap: 12px; padding-left: 3px; border: 1px solid transparent; }
.cats .selected { background: #d2d0ce; border: 1px solid #8a8886; color: #222; }
.gallery { flex: 1; display: grid; grid-template-columns: repeat(4, 60px); grid-auto-rows: 48px; gap: 8px 13px; align-content: start; padding: 15px 0 0 15px; }
.gallery svg { width: 60px; height: 48px; overflow: visible; fill: none; stroke: #7f7f7f; stroke-width: 1; shape-rendering: crispEdges; }
.gallery .smooth, .gallery .diag { shape-rendering: auto; }
.gallery .f { fill: #d2d2d2; }
.gallery .w { fill: #fff; }
.preview { width: 235px; border-left: 1px solid #a5abb5; padding: 14px 2px 2px; display: flex; flex-direction: column; color: #5f5f5f; font-size: 11px; }
.tiles { display: flex; flex-wrap: wrap; justify-content: center; gap: 7px 8px; padding: 0 24px; }
.tiles i { width: 84px; height: 51px; display: grid; place-items: center; box-shadow: 0 1px 2px #777; }
.tiles i::after { content: ""; width: 22px; height: 2px; background: #fff; }
.orange { background: linear-gradient(#f29a60, #e06c22 50%, #b8530f); }
.gray { background: linear-gradient(#c4c4c4, #999 50%, #727272); }
.gold { background: linear-gradient(#ffcb2e, #e0aa0c 50%, #b08400); }
.blue { background: linear-gradient(#688fd4, #4068b4 50%, #2d4e8c); }
.green { background: linear-gradient(#89c063, #679b44 50%, #4c7830); }
.preview h3 { margin: 11px 0 3px 11px; font-size: 11px; line-height: 16px; font-weight: 600; }
.preview p { margin: 0; flex: 1; border: 1px solid #a5abb5; padding: 1px 9px; line-height: 13px; }
.actions { display: flex; justify-content: flex-end; gap: 11px; padding: 4px 7px 8px; font-size: 11px; }
.actions button { width: 73px; height: 21px; background: #e1e1e1; border: 1px solid #adadad; }
.actions .ok { border: 2px solid #0078d7; }
```
